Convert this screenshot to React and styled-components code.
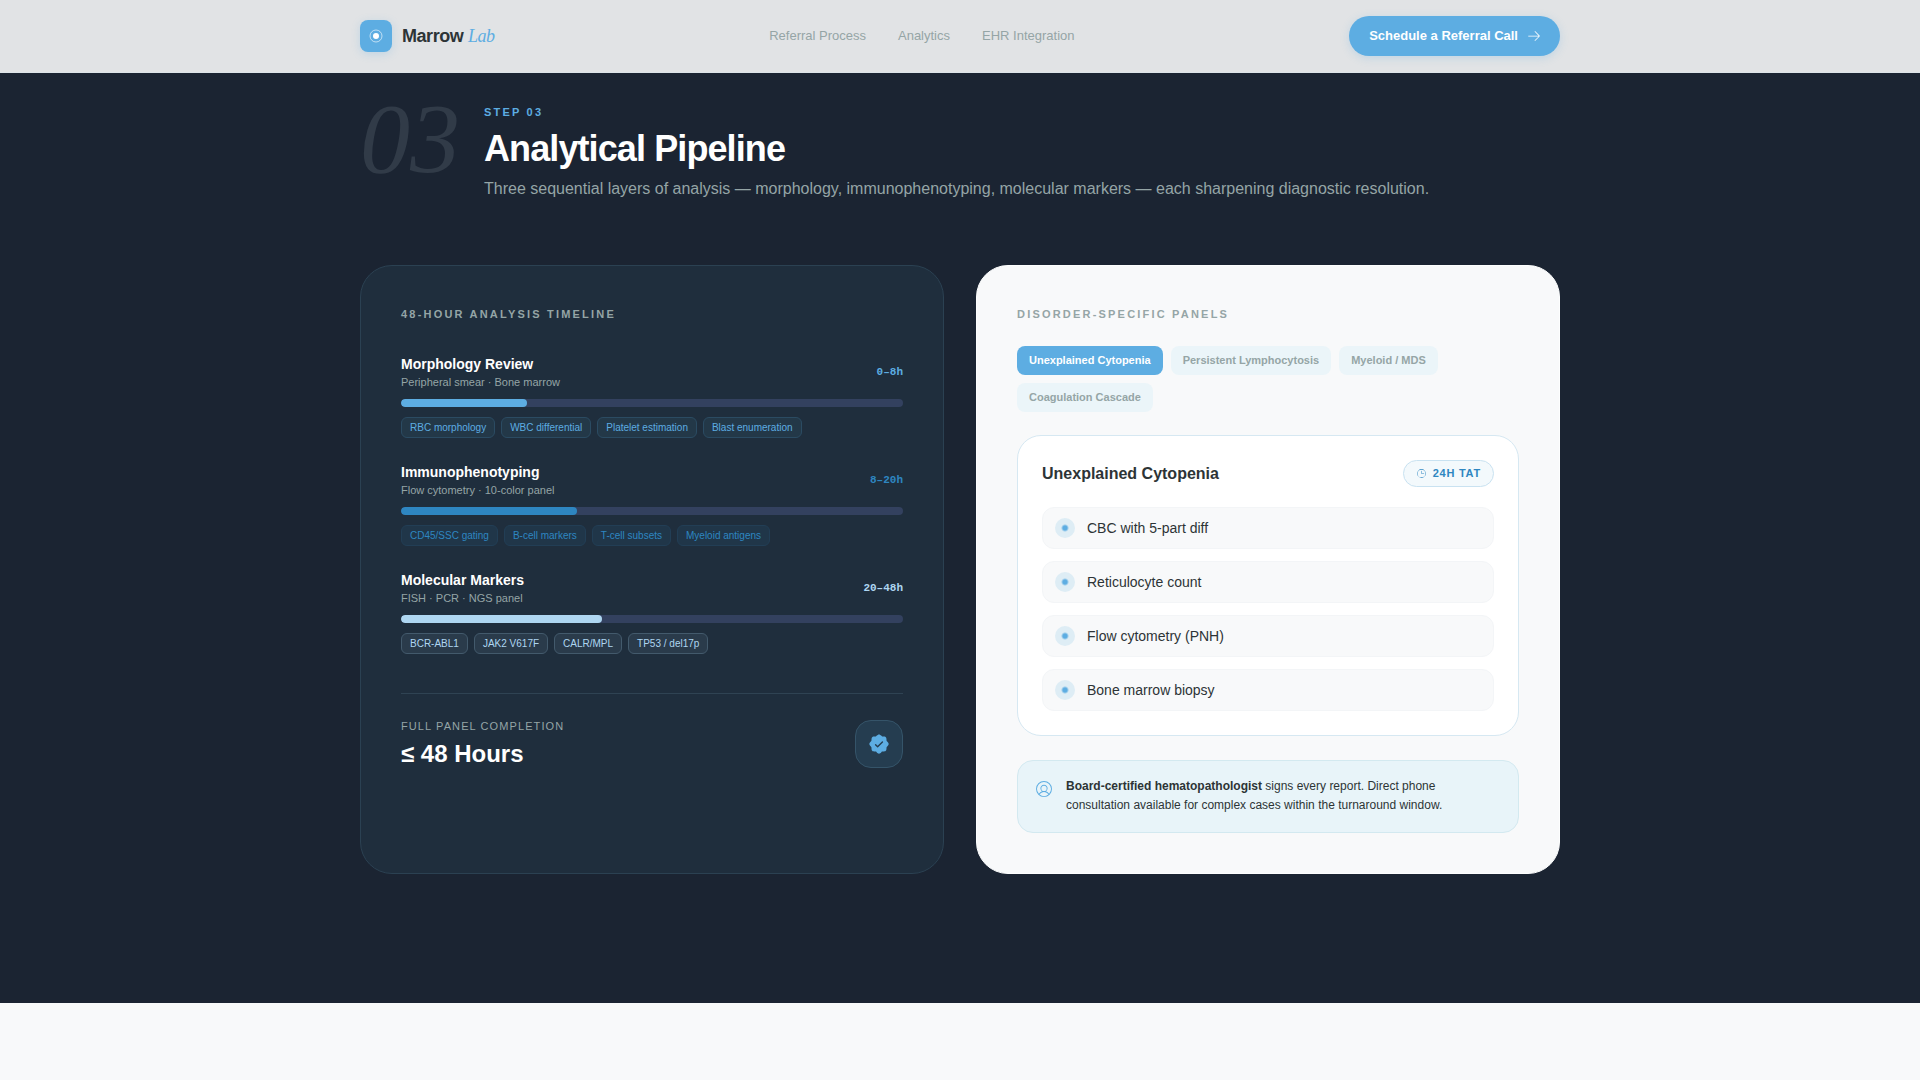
import React, { useState } from "react";
import styled, { createGlobalStyle } from "styled-components";
import { PiArrowRightLight, PiSealCheckFill, PiUserCircleLight, PiClockLight } from "react-icons/pi";

const sans = '"Liberation Sans", Arial, Helvetica, sans-serif';
const serif = '"Liberation Serif", "Times New Roman", serif';
const mono = '"Liberation Mono", "Courier New", monospace';

const GlobalStyle = createGlobalStyle`
  *, *::before, *::after { box-sizing: border-box; }
  body {
    margin: 0;
    background: #f8f9fa;
    color: #2d3436;
    font-family: ${sans};
    font-size: 14px;
  }
  h1, h2, h3, p, ul { margin: 0; padding: 0; }
  ul { list-style: none; }
  button { font-family: inherit; border: 0; cursor: pointer; }
`;

const Container = styled.div`
  width: 100%;
  max-width: 1248px;
  margin: 0 auto;
  padding: 0 24px;
`;

const Header = styled.header`
  position: sticky;
  top: 0;
  z-index: 10;
  background: #e1e3e5;
  border-bottom: 1px solid #dde4e8;
`;

const HeaderRow = styled(Container)`
  display: flex;
  align-items: center;
  justify-content: space-between;
  padding-top: 16px;
  padding-bottom: 16px;
`;

const Brand = styled.a`
  display: flex;
  align-items: center;
  gap: 10px;
  color: #2d3436;
  text-decoration: none;
`;

const LogoMark = styled.span`
  display: grid;
  place-items: center;
  width: 32px;
  height: 32px;
  border-radius: 8px;
  background: #5dade2;
  box-shadow: 0 2px 8px rgba(93, 173, 226, 0.25);
`;

const BrandName = styled.span`
  font-size: 18px;
  line-height: 28px;
  font-weight: 700;
  letter-spacing: -0.025em;

  em {
    font-family: ${serif};
    font-weight: 400;
    color: #5dade2;
  }
`;

const Nav = styled.nav`
  display: flex;
  gap: 32px;
`;

const NavLink = styled.a`
  font-size: 13px;
  line-height: 20px;
  color: #95a5a6;
  text-decoration: none;
`;

const CallButton = styled.button`
  display: flex;
  align-items: center;
  gap: 8px;
  padding: 10px 18px 10px 20px;
  border-radius: 20px;
  background: #5dade2;
  color: #fff;
  font-size: 13px;
  line-height: 20px;
  font-weight: 700;
  box-shadow: 0 2px 8px rgba(93, 173, 226, 0.25);
`;

const Section = styled.section`
  background: #1b2432;
  padding: 31px 0 129px;
`;

const Intro = styled.div`
  display: flex;
  align-items: flex-start;
  gap: 24px;
  margin-bottom: 64px;
`;

const BigNumber = styled.span`
  font-family: ${serif};
  font-style: italic;
  font-size: 100px;
  line-height: 69px;
  color: #313b48;
`;

const Step = styled.p`
  font-size: 11px;
  line-height: 16px;
  font-weight: 700;
  letter-spacing: 0.2em;
  color: #5dade2;
`;

const Title = styled.h2`
  margin: 8px 0;
  font-size: 36px;
  line-height: 41px;
  font-weight: 700;
  letter-spacing: -0.025em;
  color: #fff;
`;

const Lead = styled.p`
  font-size: 16px;
  line-height: 24px;
  color: #95a5a6;
`;

const Columns = styled.div`
  display: grid;
  grid-template-columns: 1fr 1fr;
  gap: 32px;

  @media (max-width: 900px) {
    grid-template-columns: 1fr;
  }
`;

const Card = styled.article`
  padding: 40px;
  border-radius: 32px;
  border: 1px solid ${(p) => (p.$dark ? "#2b4152" : "#fdfefe")};
  background: ${(p) => (p.$dark ? "#1f2e3d" : "#f8f9fa")};
`;

const Overline = styled.h3`
  font-size: 11px;
  line-height: 16px;
  font-weight: 700;
  letter-spacing: 0.2em;
  text-transform: uppercase;
  color: #95a5a6;
  margin-bottom: ${(p) => p.$gap}px;
`;

const Phases = styled.ul`
  display: flex;
  flex-direction: column;
  gap: 24px;
`;

const PhaseHead = styled.div`
  display: flex;
  align-items: center;
  justify-content: space-between;
  margin-bottom: 8px;
`;

const PhaseTitle = styled.h3`
  font-size: 14px;
  line-height: 20px;
  font-weight: 700;
  color: #fff;
`;

const PhaseNote = styled.p`
  font-size: 11px;
  line-height: 17px;
  color: #95a5a6;
`;

const Hours = styled.span`
  font-family: ${mono};
  font-size: 11px;
  line-height: 17px;
  font-weight: 700;
  color: ${(p) => p.$color};
`;

const Track = styled.div`
  height: 8px;
  margin-bottom: 10px;
  border-radius: 4px;
  background: #33415f;
  overflow: hidden;
`;

const Fill = styled.div`
  height: 100%;
  border-radius: 4px;
  background: ${(p) => p.$color};
`;

const Tags = styled.div`
  display: flex;
  flex-wrap: wrap;
  gap: 6px;
`;

const Tag = styled.span`
  padding: 2px 8px;
  border: 1px solid ${(p) => p.$line};
  border-radius: 6px;
  background: ${(p) => p.$bg};
  color: ${(p) => p.$color};
  font-size: 10px;
  line-height: 15px;
`;

const Summary = styled.div`
  display: flex;
  align-items: center;
  justify-content: space-between;
  margin-top: 39px;
  padding-top: 24px;
  border-top: 1px solid #2f4353;
`;

const SummaryLabel = styled.p`
  margin-bottom: 4px;
  font-size: 11px;
  line-height: 16px;
  letter-spacing: 0.1em;
  text-transform: uppercase;
  color: #95a5a6;
`;

const SummaryValue = styled.p`
  font-size: 24px;
  line-height: 32px;
  font-weight: 700;
  color: #fff;
`;

const Seal = styled.span`
  display: grid;
  place-items: center;
  width: 48px;
  height: 48px;
  border: 1px solid #355469;
  border-radius: 16px;
  background: #253d50;
  color: #5dade2;
`;

const Tabs = styled.div`
  display: flex;
  flex-wrap: wrap;
  gap: 8px;
  margin-bottom: 23px;
`;

const Tab = styled.button`
  padding: 6px 12px;
  border-radius: 8px;
  background: ${(p) => (p.$active ? "#5dade2" : "#ebf5f9")};
  color: ${(p) => (p.$active ? "#fff" : "#95a5a6")};
  font-size: 11px;
  line-height: 17px;
  font-weight: 700;
`;

const Panel = styled.div`
  padding: 24px;
  border: 1px solid #d6e8f2;
  border-radius: 24px;
  background: #fff;
`;

const PanelHead = styled.div`
  display: flex;
  align-items: center;
  justify-content: space-between;
  margin-bottom: 20px;
`;

const PanelTitle = styled.h3`
  font-size: 16px;
  line-height: 24px;
  font-weight: 700;
`;

const Turnaround = styled.span`
  display: flex;
  align-items: center;
  gap: 6px;
  padding: 4px 12px;
  border: 1px solid #c9e2f1;
  border-radius: 14px;
  background: #f3f9fc;
  color: #2e86c1;
  font-size: 11px;
  line-height: 17px;
  font-weight: 700;
  letter-spacing: 0.07em;
`;

const Tests = styled.ul`
  display: flex;
  flex-direction: column;
  gap: 12px;
`;

const Test = styled.li`
  display: flex;
  align-items: center;
  gap: 12px;
  padding: 10px 12px;
  border: 1px solid #f3f5f7;
  border-radius: 12px;
  background: #f8f9fa;
  font-size: 14px;
  line-height: 20px;

  &::before {
    content: "";
    width: 20px;
    height: 20px;
    border-radius: 50%;
    background: radial-gradient(circle, #5dade2 2px, #deedf5 4px);
  }
`;

const Note = styled.aside`
  display: flex;
  align-items: flex-start;
  gap: 12px;
  margin-top: 24px;
  padding: 16px 16px 17px;
  border: 1px solid #d3e9f0;
  border-radius: 16px;
  background: #e8f4f9;

  svg {
    flex: none;
    margin-top: 2px;
    color: #5dade2;
  }
`;

const NoteText = styled.p`
  max-width: 400px;
  font-size: 12px;
  line-height: 19px;
`;

const phases = [
  {
    title: "Morphology Review", note: "Peripheral smear · Bone marrow", hours: "0–8h", share: 25,
    color: "#5dade2", line: "#2b4b62", bg: "#233848",
    tags: ["RBC morphology", "WBC differential", "Platelet estimation", "Blast enumeration"],
  },
  {
    title: "Immunophenotyping", note: "Flow cytometry · 10-color panel", hours: "8–20h", share: 35,
    color: "#2e86c1", line: "#223e55", bg: "#203649",
    tags: ["CD45/SSC gating", "B-cell markers", "T-cell subsets", "Myeloid antigens"],
  },
  {
    title: "Molecular Markers", note: "FISH · PCR · NGS panel", hours: "20–48h", share: 40,
    color: "#aed6f1", line: "#435a6c", bg: "#2a3b4b",
    tags: ["BCR-ABL1", "JAK2 V617F", "CALR/MPL", "TP53 / del17p"],
  },
];

const panels = ["Unexplained Cytopenia", "Persistent Lymphocytosis", "Myeloid / MDS", "Coagulation Cascade"];
const tests = ["CBC with 5-part diff", "Reticulocyte count", "Flow cytometry (PNH)", "Bone marrow biopsy"];

export default function App() {
  const [active, setActive] = useState(panels[0]);

  return (
    <>
      <GlobalStyle />
      <Header>
        <HeaderRow>
          <Brand href="#">
            <LogoMark>
              <svg width="14" height="14" viewBox="0 0 14 14" fill="none" aria-hidden="true">
                <circle cx="7" cy="7" r="6" stroke="#fff" strokeOpacity="0.6" />
                <circle cx="7" cy="7" r="3" fill="#fff" />
              </svg>
            </LogoMark>
            <BrandName>Marrow <em>Lab</em></BrandName>
          </Brand>
          <Nav>
            <NavLink href="#process">Referral Process</NavLink>
            <NavLink href="#analytics">Analytics</NavLink>
            <NavLink href="#ehr">EHR Integration</NavLink>
          </Nav>
          <CallButton type="button">
            Schedule a Referral Call
            <PiArrowRightLight size={16} />
          </CallButton>
        </HeaderRow>
      </Header>

      <Section id="analytics">
        <Container>
          <Intro>
            <BigNumber aria-hidden="true">03</BigNumber>
            <div>
              <Step>STEP 03</Step>
              <Title>Analytical Pipeline</Title>
              <Lead>
                Three sequential layers of analysis — morphology, immunophenotyping, molecular markers — each sharpening diagnostic resolution.
              </Lead>
            </div>
          </Intro>

          <Columns>
            <Card $dark>
              <Overline $gap={32}>48-Hour Analysis Timeline</Overline>
              <Phases>
                {phases.map((phase) => (
                  <li key={phase.title}>
                    <PhaseHead>
                      <div>
                        <PhaseTitle>{phase.title}</PhaseTitle>
                        <PhaseNote>{phase.note}</PhaseNote>
                      </div>
                      <Hours $color={phase.color}>{phase.hours}</Hours>
                    </PhaseHead>
                    <Track>
                      <Fill $color={phase.color} style={{ width: `${phase.share}%` }} />
                    </Track>
                    <Tags>
                      {phase.tags.map((tag) => (
                        <Tag key={tag} $color={phase.color} $line={phase.line} $bg={phase.bg}>{tag}</Tag>
                      ))}
                    </Tags>
                  </li>
                ))}
              </Phases>
              <Summary>
                <div>
                  <SummaryLabel>Full Panel Completion</SummaryLabel>
                  <SummaryValue>≤ 48 Hours</SummaryValue>
                </div>
                <Seal><PiSealCheckFill size={22} /></Seal>
              </Summary>
            </Card>

            <Card>
              <Overline $gap={24}>Disorder-Specific Panels</Overline>
              <Tabs>
                {panels.map((name) => (
                  <Tab key={name} type="button" $active={name === active} aria-pressed={name === active} onClick={() => setActive(name)}>
                    {name}
                  </Tab>
                ))}
              </Tabs>
              <Panel>
                <PanelHead>
                  <PanelTitle>{active}</PanelTitle>
                  <Turnaround><PiClockLight size={11} />24H TAT</Turnaround>
                </PanelHead>
                <Tests>
                  {tests.map((test) => <Test key={test}>{test}</Test>)}
                </Tests>
              </Panel>
              <Note>
                <PiUserCircleLight size={20} />
                <NoteText>
                  <strong>Board-certified hematopathologist</strong> signs every report. Direct phone consultation available for complex cases within the turnaround window.
                </NoteText>
              </Note>
            </Card>
          </Columns>
        </Container>
      </Section>
    </>
  );
}
